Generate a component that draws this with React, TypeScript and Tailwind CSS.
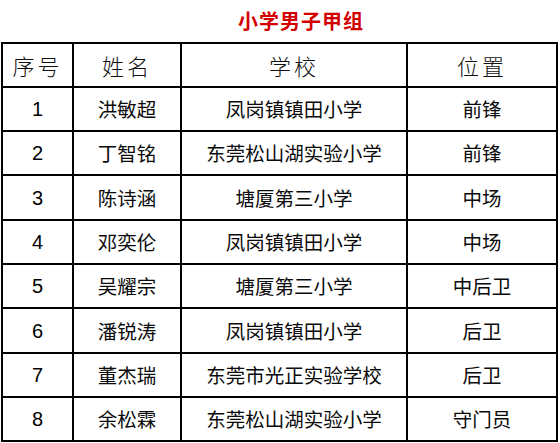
import React from "react";

const rows = [
  ["1", "洪敏超", "凤岗镇镇田小学", "前锋"],
  ["2", "丁智铭", "东莞松山湖实验小学", "前锋"],
  ["3", "陈诗涵", "塘厦第三小学", "中场"],
  ["4", "邓奕伦", "凤岗镇镇田小学", "中场"],
  ["5", "吴耀宗", "塘厦第三小学", "中后卫"],
  ["6", "潘锐涛", "凤岗镇镇田小学", "后卫"],
  ["7", "董杰瑞", "东莞市光正实验学校", "后卫"],
  ["8", "余松霖", "东莞松山湖实验小学", "守门员"],
];

const heights = ["h-[44px]", "h-[44px]", "h-[45px]", "h-[44px]", "h-[44px]", "h-[45px]", "h-[44px]", "h-[44px]"];

export default function App() {
  return (
    <div className="w-[560px] h-[443px] bg-white overflow-hidden font-['Noto_Sans_CJK_SC',sans-serif]">
      <div className="h-[42px] flex items-center justify-center pl-[42px] text-[20px] font-bold text-[#d40000] tracking-[1px]">
        小学男子甲组
      </div>
      <div className="ml-[1px] w-[557px] border-l-2 border-t-2 border-black grid grid-cols-[71px_108px_226px_150px]">
        {["序号", "姓名", "学校", "位置"].map((h) => (
          <div
            key={h}
            className="h-[44px] border-r-2 border-b-2 border-black flex items-center justify-center text-[22px] font-light text-[#111] tracking-[3px]"
          >
            {h}
          </div>
        ))}
        {rows.map((r, i) => (
          <React.Fragment key={i}>
            <div
              className={`${heights[i]} border-r-2 border-b-2 border-black flex items-center justify-center text-[20px] text-black font-['Liberation_Sans',Arial,sans-serif]`}
            >
              {r[0]}
            </div>
            {r.slice(1).map((c, j) => (
              <div
                key={j}
                className={`${heights[i]} border-r-2 border-b-2 border-black flex items-center justify-center text-[19.5px] text-[#0a0a0a]`}
              >
                {c}
              </div>
            ))}
          </React.Fragment>
        ))}
      </div>
    </div>
  );
}
